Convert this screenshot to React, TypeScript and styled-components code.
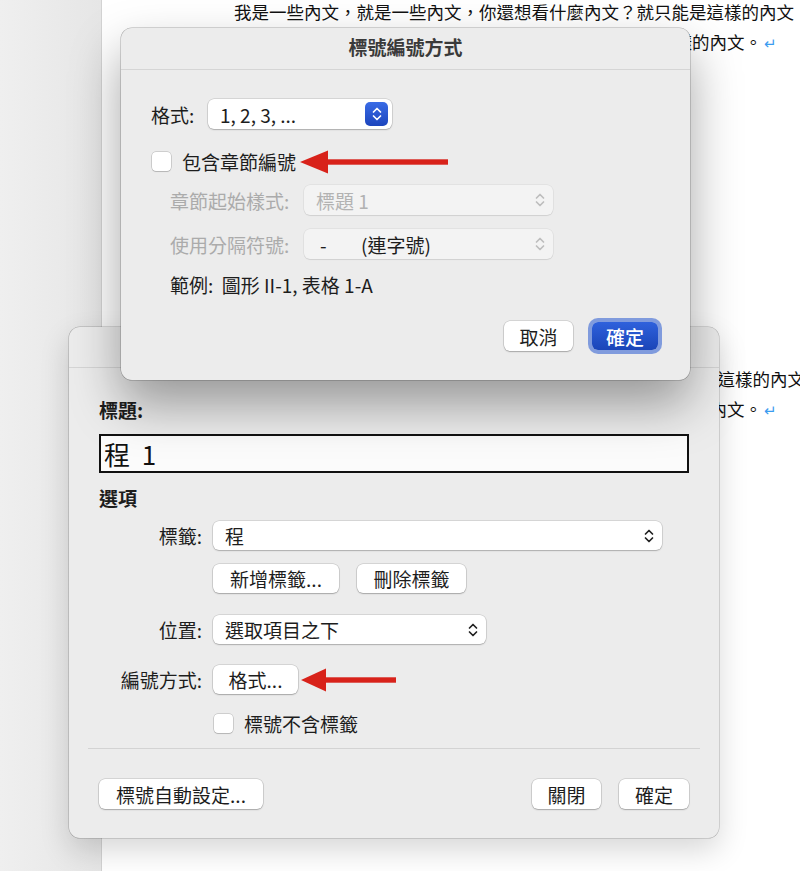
import styled, { createGlobalStyle, css } from 'styled-components'

const GlobalStyle = createGlobalStyle`
	html, body {
		margin: 0;
		padding: 0;
		background: #ebebeb;
	}
	body {
		font-family: 'Noto Sans CJK TC', 'Noto Sans', sans-serif;
		color: #1d1d1d;
	}
`

/* ---------- desktop + document page ---------- */

const Desktop = styled.div`
	position: relative;
	display: flex;
	width: 800px;
	height: 871px;
	overflow: hidden;
`

const Gutter = styled.div`
	flex: none;
	width: 101px;
	background: linear-gradient(90deg, #efefef 0%, #e6e6e6 100%);
	border-right: 1px solid #d3d3d3;
`

const Page = styled.div`
	flex: 1;
	min-width: 0;
	background: #fff;
	overflow: hidden;
	font-size: 17.5px;
	color: #111;
	white-space: nowrap;
`

const Paragraph = styled.div<{ $top: number }>`
	margin-top: ${(p) => p.$top}px;
`

const Line = styled.div<{ $indent?: number; $end?: number }>`
	height: 30px;
	line-height: 30px;
	padding-left: ${(p) => p.$indent ?? 0}px;
	${(p) =>
		p.$end !== undefined &&
		css`
			text-align: right;
			padding-right: ${p.$end}px;
		`}
`

const Return = styled.span`
	color: #3b9cf0;
	margin-left: 2px;
	font-size: 15px;
`

/* ---------- dialogs ---------- */

const Dialog = styled.section<{ $left: number; $top: number; $width: number; $raised?: boolean }>`
	position: absolute;
	left: ${(p) => p.$left}px;
	top: ${(p) => p.$top}px;
	width: ${(p) => p.$width}px;
	box-sizing: border-box;
	background: #ececec;
	border-radius: 11px;
	font-size: 19px;
	z-index: ${(p) => (p.$raised ? 2 : 1)};
	box-shadow: ${(p) =>
		p.$raised
			? '0 0 0 0.5px rgba(0,0,0,.3), 0 24px 50px rgba(0,0,0,.36)'
			: '0 0 0 0.5px rgba(0,0,0,.25), 0 12px 30px rgba(0,0,0,.16)'};
`

const TitleBar = styled.header<{ $height: number }>`
	height: ${(p) => p.$height}px;
	box-sizing: border-box;
	padding-bottom: 5px;
	border-bottom: 1px solid #d5d5d5;
	display: flex;
	align-items: center;
	justify-content: center;
	font-size: 19px;
	font-weight: 700;
	color: #3a3a3a;
`

const Body = styled.div<{ $pad: string }>`
	display: flex;
	flex-direction: column;
	padding: ${(p) => p.$pad};
`

const Row = styled.div<{ $mt: number; $h?: number; $indent?: number; $end?: boolean; $gap?: number }>`
	display: flex;
	align-items: center;
	margin-top: ${(p) => p.$mt}px;
	height: ${(p) => p.$h ?? 30}px;
	padding-left: ${(p) => p.$indent ?? 0}px;
	gap: ${(p) => p.$gap ?? 0}px;
	${(p) => p.$end && 'justify-content: flex-end;'}
`

const FieldLabel = styled.span<{ $width: number; $muted?: boolean; $right?: boolean }>`
	flex: none;
	width: ${(p) => p.$width}px;
	color: ${(p) => (p.$muted ? '#ababab' : '#1d1d1d')};
	text-align: ${(p) => (p.$right ? 'right' : 'left')};
	white-space: nowrap;
`

const SelectBox = styled.div<{ $width: number; $height?: number; $disabled?: boolean; $stepper?: boolean }>`
	flex: none;
	width: ${(p) => p.$width}px;
	height: ${(p) => p.$height ?? 30}px;
	box-sizing: border-box;
	display: flex;
	align-items: center;
	justify-content: space-between;
	padding: ${(p) => (p.$stepper ? '0 4px 0 12px' : '0 8px 0 12px')};
	background: ${(p) => (p.$disabled ? '#f3f3f3' : '#fff')};
	color: ${(p) => (p.$disabled ? '#b2b2b2' : '#1d1d1d')};
	border-radius: 6px;
	box-shadow: ${(p) =>
		p.$disabled
			? '0 0 0 0.5px rgba(0,0,0,.08), 0 1px 1px rgba(0,0,0,.08)'
			: '0 0 0 0.5px rgba(0,0,0,.18), 0 1px 1.5px rgba(0,0,0,.2)'};
	white-space: nowrap;
`

const SelectValue = styled.span`
	color: #1d1d1d;
`

const Stepper = styled.span`
	width: 23px;
	height: 24px;
	border-radius: 5px;
	display: flex;
	align-items: center;
	justify-content: center;
	background: linear-gradient(180deg, #3a6ce6 0%, #1c45bd 100%);
`

const Dash = styled.span`
	display: inline-block;
	width: 41px;
	padding-left: 4px;
`

const Button = styled.button<{ $width: number; $height?: number; $primary?: boolean }>`
	flex: none;
	width: ${(p) => p.$width}px;
	height: ${(p) => p.$height ?? 30}px;
	border: none;
	border-radius: 6px;
	padding: 0;
	font: inherit;
	font-size: 19px;
	cursor: default;
	color: ${(p) => (p.$primary ? '#fff' : '#1d1d1d')};
	background: ${(p) => (p.$primary ? 'linear-gradient(180deg, #2f61dc 0%, #1a45b8 100%)' : '#fff')};
	box-shadow: ${(p) =>
		p.$primary
			? '0 0 0 4px rgba(70,112,214,.65)'
			: '0 0 0 0.5px rgba(0,0,0,.2), 0 1px 1.5px rgba(0,0,0,.22)'};
	font-weight: ${(p) => (p.$primary ? 500 : 400)};
`

const CheckBox = styled.span`
	flex: none;
	width: 19px;
	height: 19px;
	box-sizing: border-box;
	border-radius: 4px;
	background: #fff;
	box-shadow: 0 0 0 0.5px rgba(0,0,0,.25), 0 1px 1px rgba(0,0,0,.12);
`

const CheckLabel = styled.span`
	margin-left: 11px;
	white-space: nowrap;
`

const SectionTitle = styled.div<{ $mt: number }>`
	margin-top: ${(p) => p.$mt}px;
	height: 20px;
	line-height: 20px;
	font-weight: 700;
`

const TitleInput = styled.div`
	margin-top: 14px;
	height: 39px;
	box-sizing: border-box;
	border: 2px solid #111;
	background: #fbfbfb;
	display: flex;
	align-items: center;
	padding-left: 3px;
	font-size: 26px;
	color: #111;
`

const Separator = styled.hr`
	margin: 15px -11px 0;
	border: none;
	height: 1px;
	background: #d3d3d3;
`

const Spacer = styled.span`
	flex: 1;
`

// red call-out arrow, nudged against whatever it points at
const PointerSlot = styled.span<{ $offset: number }>`
	display: flex;
	flex: none;
	margin-left: ${(p) => p.$offset}px;
`

/* ---------- drawings ---------- */

const UpDown = ({ color = '#3a3a3a' }: { color?: string }) => (
	<svg width='10' height='16' viewBox='0 0 10 16' fill='none' stroke={color} strokeWidth='1.7' strokeLinecap='round' strokeLinejoin='round'>
		<path d='M1.5 6 L5 2.5 L8.5 6' />
		<path d='M1.5 10 L5 13.5 L8.5 10' />
	</svg>
)

const Pointer = ({ length, head = 28, offset = 0 }: { length: number; head?: number; offset?: number }) => (
	<PointerSlot $offset={offset}>
		<svg width={length} height='24' viewBox={`0 0 ${length} 24`}>
			<polygon points={`0,12 ${head},0.5 ${head},23.5`} fill='#d8221a' />
			<rect x={head - 2} y='9.3' width={length - head + 2} height='5.4' fill='#d8221a' />
		</svg>
	</PointerSlot>
)

const FormatDialog = () => (
	<Dialog $left={121} $top={28} $width={569} $raised>
		<TitleBar $height={42}>標號編號方式</TitleBar>
		<Body $pad='0 32px 26px 30px'>
			<Row $mt={29}>
				<FieldLabel $width={57}>格式:</FieldLabel>
				<SelectBox $width={184} $stepper>
					1, 2, 3, ...
					<Stepper>
						<UpDown color='#fff' />
					</Stepper>
				</SelectBox>
			</Row>
			<Row $mt={23} $h={19} $indent={1}>
				<CheckBox />
				<CheckLabel>包含章節編號</CheckLabel>
				<Pointer length={148} offset={4} />
			</Row>
			<Row $mt={14} $indent={19}>
				<FieldLabel $width={134} $muted>
					章節起始樣式:
				</FieldLabel>
				<SelectBox $width={249} $disabled>
					標題 1
					<UpDown color='#bdbdbd' />
				</SelectBox>
			</Row>
			<Row $mt={14} $indent={19}>
				<FieldLabel $width={134} $muted>
					使用分隔符號:
				</FieldLabel>
				<SelectBox $width={249} $disabled>
					<SelectValue>
						<Dash>-</Dash>(連字號)
					</SelectValue>
					<UpDown color='#bdbdbd' />
				</SelectBox>
			</Row>
			<Row $mt={15} $h={20} $indent={19}>
				範例:&nbsp;&nbsp;圖形 II-1, 表格 1-A
			</Row>
			<Row $mt={24} $h={36} $end $gap={19}>
				<Button $width={69}>取消</Button>
				<Button $width={66} $height={28} $primary>
					確定
				</Button>
			</Row>
		</Body>
	</Dialog>
)

const CaptionDialog = () => (
	<Dialog $left={69} $top={327} $width={650}>
		<TitleBar $height={41} />
		<Body $pad='0 30px 29px'>
			<SectionTitle $mt={32}>標題:</SectionTitle>
			<TitleInput>程&nbsp;&nbsp;1</TitleInput>
			<SectionTitle $mt={15}>選項</SectionTitle>
			<Row $mt={13} $h={29} $gap={11}>
				<FieldLabel $width={103} $right>
					標籤:
				</FieldLabel>
				<SelectBox $width={449} $height={29}>
					程
					<UpDown color='#222' />
				</SelectBox>
			</Row>
			<Row $mt={14} $h={29} $indent={114} $gap={18}>
				<Button $width={126} $height={29}>
					新增標籤...
				</Button>
				<Button $width={109} $height={29}>
					刪除標籤
				</Button>
			</Row>
			<Row $mt={22} $h={29} $gap={11}>
				<FieldLabel $width={103} $right>
					位置:
				</FieldLabel>
				<SelectBox $width={273} $height={29}>
					選取項目之下
					<UpDown color='#222' />
				</SelectBox>
			</Row>
			<Row $mt={21} $h={29} $gap={11}>
				<FieldLabel $width={103} $right>
					編號方式:
				</FieldLabel>
				<Button $width={85} $height={29}>
					格式...
				</Button>
				<Pointer length={95} head={25} offset={-8} />
			</Row>
			<Row $mt={20} $h={19} $indent={115}>
				<CheckBox />
				<CheckLabel>標號不含標籤</CheckLabel>
			</Row>
			<Separator />
			<Row $mt={30} $gap={18}>
				<Button $width={164}>標號自動設定...</Button>
				<Spacer />
				<Button $width={69}>關閉</Button>
				<Button $width={70}>確定</Button>
			</Row>
		</Body>
	</Dialog>
)

export default function App() {
	return (
		<>
			<GlobalStyle />
			<Desktop>
				<Gutter />
				<Page>
					<Paragraph $top={-3}>
						<Line $indent={132}>我是一些內文，就是一些內文，你還想看什麼內文？就只能是這樣的內文</Line>
						<Line $end={23}>
							就只能是這樣的內文。<Return>↵</Return>
						</Line>
					</Paragraph>
					<Paragraph $top={307}>
						<Line $indent={143}>我是一些內文，就是一些內文，你還想看什麼內文？就只能是這樣的內文</Line>
						<Line $end={23}>
							就只能是這樣的內文。<Return>↵</Return>
						</Line>
					</Paragraph>
				</Page>
				<FormatDialog />
				<CaptionDialog />
			</Desktop>
		</>
	)
}
